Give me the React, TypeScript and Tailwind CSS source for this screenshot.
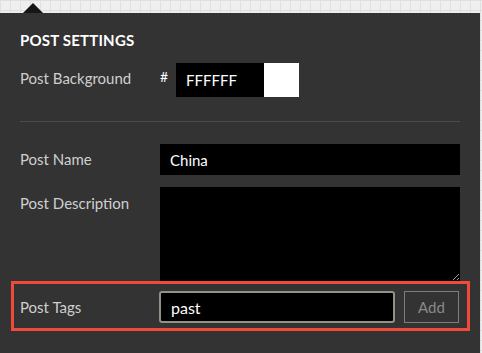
import { useState } from 'react';

export default function App() {
  const [name, setName] = useState('China');
  const [tag, setTag] = useState('past');

  return (
    <div className="w-[482px] h-[353px] overflow-hidden bg-[#efefef] bg-[linear-gradient(to_right,#e0e0e0_1px,transparent_1px),linear-gradient(to_bottom,#e0e0e0_1px,transparent_1px)] bg-[size:10px_10px] font-['Lato','Open_Sans',sans-serif]">
      {/* pointer */}
      <div className="h-[13px] pl-[23px] pt-[3px]">
        <div className="w-0 h-0 border-l-[10px] border-r-[10px] border-b-[10px] border-l-transparent border-r-transparent border-b-[#161616]" />
      </div>

      {/* panel */}
      <div className="w-[480px] h-[340px] bg-[#333333] pl-[20px] pr-[20px] pt-[17px]">
        <h2 className="text-[15px] leading-[20px] font-bold text-white tracking-[0.2px]">POST SETTINGS</h2>

        {/* background */}
        <div className="mt-[13px] flex items-center h-[34px]">
          <span className="w-[140px] text-[15px] text-[#cfcfcf] -mt-[4px]">Post Background</span>
          <span className="w-[16px] text-[14px] text-white -mt-[8px]">#</span>
          <div className="w-[88px] h-[34px] bg-black flex items-center pl-[10px] text-[15px] text-white">FFFFFF</div>
          <div className="w-[35px] h-[34px] bg-white" />
        </div>

        <div className="mt-[24px] h-px bg-[#4b4b4b]" />

        {/* name */}
        <div className="mt-[22px] flex items-center">
          <label className="w-[140px] text-[15px] text-[#cfcfcf]">Post Name</label>
          <input
            value={name}
            onChange={(e) => setName(e.target.value)}
            className="w-[300px] h-[31px] bg-black text-white text-[15px] pl-[10px] outline-none"
          />
        </div>

        {/* description */}
        <div className="mt-[12px] flex items-start">
          <label className="w-[140px] text-[15px] text-[#cfcfcf] pt-[5px]">Post Description</label>
          <textarea className="w-[300px] h-[94px] bg-black text-white text-[15px] p-[8px] outline-none block [color-scheme:dark]" />
        </div>

        {/* tags (highlighted) */}
        <div className="-ml-[9px] w-[459px] border-[3px] border-[#f24a3a] pl-[6px] pt-[7px] pb-[5px] flex items-center">
          <label className="w-[139px] text-[15px] text-[#cfcfcf]">Post Tags</label>
          <input
            value={tag}
            onChange={(e) => setTag(e.target.value)}
            className="w-[236px] h-[32px] bg-black text-white text-[16px] pl-[10px] border-2 border-[#929284] rounded-[3px] outline-none"
          />
          <button className="ml-[9px] w-[55px] h-[32px] border border-[#7d7d7d] text-[15px] text-[#8a8a8a]">Add</button>
        </div>
      </div>
    </div>
  );
}
